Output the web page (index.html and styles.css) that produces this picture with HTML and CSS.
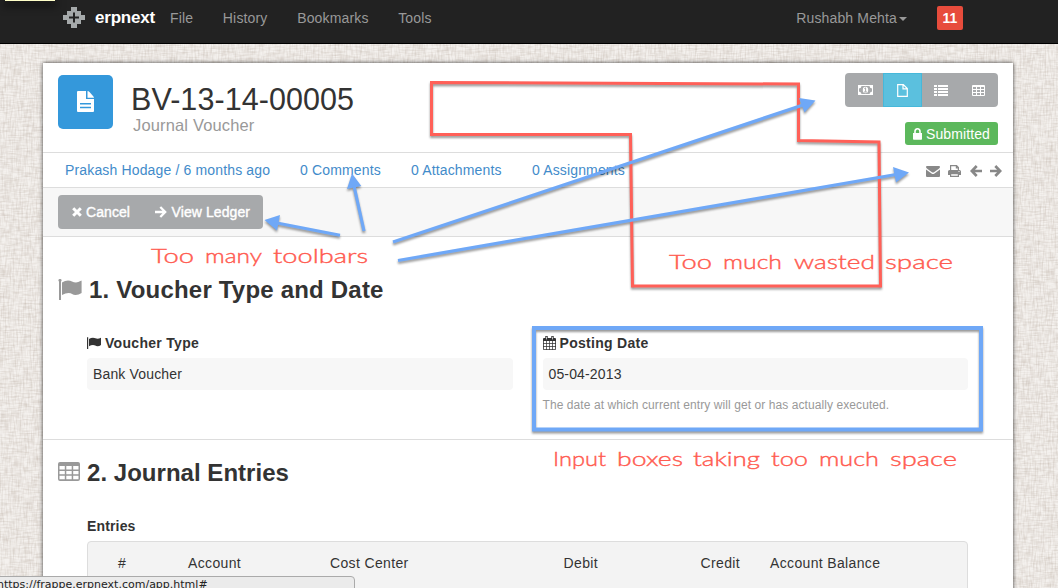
FILE: index.html
```html
<!DOCTYPE html>
<html lang="en">
<head>
<meta charset="utf-8">
<title>BV-13-14-00005</title>
<link rel="stylesheet" href="styles.css">
</head>
<body>
<svg class="linen" width="1058" height="588" aria-hidden="true">
  <filter id="weave-h" x="0" y="0" width="100%" height="100%" color-interpolation-filters="sRGB"><feTurbulence type="fractalNoise" baseFrequency="0.09 0.6" numOctaves="2" seed="4"/><feColorMatrix values="0 0 0 0 .6  0 0 0 0 .53  0 0 0 0 .47  .45 0 0 0 -.17"/></filter>
  <filter id="weave-v" x="0" y="0" width="100%" height="100%" color-interpolation-filters="sRGB"><feTurbulence type="fractalNoise" baseFrequency="0.6 0.09" numOctaves="2" seed="9"/><feColorMatrix values="0 0 0 0 .6  0 0 0 0 .53  0 0 0 0 .47  .45 0 0 0 -.17"/></filter>
  <rect width="1058" height="588" filter="url(#weave-h)"/>
  <rect width="1058" height="588" filter="url(#weave-v)"/>
</svg>

<nav class="navbar">
  <svg class="brand-mark" width="22" height="21" viewBox="0 0 22 21"><path fill="#a5a9aa" d="M8 0h6v4h4v4h4v5h-4v4h-4v4H8v-4H4v-4H0V8h4V4h4z"/><path fill="#222" d="M10 5.500h2v4h4v2h-4v4h-2v-4H6v-2h4z"/></svg>
  <span class="brand">erpnext</span>
  <a class="nav-link">File</a>
  <a class="nav-link">History</a>
  <a class="nav-link">Bookmarks</a>
  <a class="nav-link">Tools</a>
  <a class="user">Rushabh Mehta<i class="caret"></i></a>
  <span class="count">11</span>
</nav>

<main class="page">
  <header class="head">
    <div class="doc-icon"><svg width="18" height="21" viewBox="0 0 18 21"><path fill="#fff" fill-rule="evenodd" d="M1 0h8v8h8v12q0 1-1 1H1q-1 0-1-1V1q0-1 1-1zM3 12v1.500h11V12zM3 15.700v1.500h11v-1.500z"/><path fill="#fff" d="M10.500 0q1 0 2 1l3.500 4q1 1 1 1.700h-6.500z"/></svg></div>
    <div class="titles">
      <h1>BV-13-14-00005</h1>
      <div class="doctype">Journal Voucher</div>
    </div>
    <div class="head-right">
      <div class="views">
        <span class="view"><svg width="15" height="10" viewBox="0 0 15 10"><path fill="#fff" fill-rule="evenodd" d="M0 0h15v10H0zM3.500 1Q3.500 3 1 3.500v3q2.500.5 2.500 2.500h8q0-2 2.500-2.500v-3Q11.500 3 11.500 1z"/><ellipse cx="7.500" cy="5" rx="2.700" ry="3.300" fill="#fff"/><path d="M6.300 3.500l1.300-.7v4M6 7h3" stroke="#a7a9ab" fill="none"/></svg></span>
        <span class="view active"><svg width="11" height="13" viewBox="0 0 11 13"><path fill="none" stroke="#fff" stroke-width="1.200" d="M.7.6h5.600l4 4v7.700H.7zM6 .6v4.300h4.300"/></svg></span>
        <span class="view"><svg width="14" height="11" viewBox="0 0 14 11"><path fill="#fff" d="M0 0h3v2H0zM4 0h10v2H4zM0 3h3v2H0zM4 3h10v2H4zM0 6h3v2H0zM4 6h10v2H4zM0 9h3v2H0zM4 9h10v2H4z"/></svg></span>
        <span class="view"><svg width="13" height="11" viewBox="0 0 13 11"><path fill="#fff" fill-rule="evenodd" d="M1 0h11q1 0 1 1v9q0 1-1 1H1q-1 0-1-1V1q0-1 1-1zM1 2v2h3V2zM5 2v2h3V2zM9 2v2h3V2zM1 5v2h3V5zM5 5v2h3V5zM9 5v2h3V5zM1 8v2h3V8zM5 8v2h3V8zM9 8v2h3V8z"/></svg></span>
      </div>
      <span class="status"><svg width="9" height="12" viewBox="0 0 9 12"><path fill="#fff" d="M0 5h9v6q0 .8-.8.8H.8Q0 11.800 0 11z"/><path fill="none" stroke="#fff" stroke-width="1.600" d="M2 5.500V3.500a2.500 2.700 0 0 1 5 0v2"/></svg>Submitted</span>
    </div>
  </header>

  <div class="info">
    <a class="author">Prakash Hodage / 6 months ago</a>
    <a class="comments">0 Comments</a>
    <a class="attachments">0 Attachments</a>
    <a class="assignments">0 Assignments</a>
    <span class="tools">
      <svg width="14" height="11" viewBox="0 0 14 11"><path fill="#888" d="M1 0h12q1 0 1 1Q14 2 12.500 3L8 6.200q-1 .7-2 0L1.500 3Q0 2 0 1q0-1 1-1zM0 3.500l5.500 4q1.500 1 3 0l5.500-4V10q0 1-1 1H1q-1 0-1-1z"/></svg>
      <svg width="13" height="12" viewBox="0 0 13 12"><path fill="none" stroke="#888" stroke-width="1.200" d="M2.600 5.500V.6h6l1.800 1.800v3.100M8.400.8v2h2M2.600 8.600h7.800v2.800H2.600z"/><path fill="#888" fill-rule="evenodd" d="M1.500 5h10Q13 5 13 6.500V10h-2.600V8H2.600v2H0V6.500Q0 5 1.500 5zM10.500 6v1h1V6z"/></svg>
      <svg width="12" height="12" viewBox="0 0 12 12"><path fill="none" stroke="#888" stroke-width="2.700" d="M6.700 1L1.800 6l4.900 5M2 6h10"/></svg>
      <svg width="12" height="12" viewBox="0 0 12 12"><path fill="none" stroke="#888" stroke-width="2.700" d="M5.300 1l4.900 5-4.900 5M10 6H0"/></svg>
    </span>
  </div>

  <div class="actions">
    <div class="btn-group">
      <span class="btn"><svg width="10" height="10" viewBox="0 0 10 10"><path stroke="#fff" stroke-width="3" d="M1.200 1.200l7.600 7.600M8.800 1.200L1.200 8.800"/></svg>Cancel</span>
      <span class="btn"><svg width="12" height="12" viewBox="0 0 12 12"><path fill="none" stroke="#fff" stroke-width="2.300" d="M5.300 1l4.900 5-4.900 5M10 6H0"/></svg>View Ledger</span>
    </div>
  </div>

  <section class="section voucher">
    <h2><svg class="flag-lg" width="24" height="21" viewBox="0 0 24 21"><path fill="#999" d="M1 2.500a1.500 1.500 0 1 1 2 0V21H1zM4 3.500Q7 1.500 10 1.500c3 0 5 2 8 2q2 0 5-1.800.6-.3.600.5V14q-3 2-6 2c-3 0-4-2-7-2q-3 0-6.600 2z"/></svg>1. Voucher Type and Date</h2>
    <div class="fields">
      <div class="field">
        <div class="label"><svg width="14" height="12" viewBox="0 0 14 12"><path fill="#333" d="M0 .3h1.200V12H0zM2 2Q4 .8 6 .8c2 0 3 1 4.500 1Q12 1.800 14 .8V8q-1.600 1.200-3.500 1.200C8.500 9.200 8 8 6 8Q4 8 2 9.200z"/></svg>Voucher Type</div>
        <div class="value">Bank Voucher</div>
      </div>
      <div class="field">
        <div class="label"><svg width="13" height="14" viewBox="0 0 13 14"><path fill="#333" fill-rule="evenodd" d="M1 2h11q1 0 1 1v10q0 1-1 1H1q-1 0-1-1V3q0-1 1-1zM.8 5v2.200H3.200V5zM3.900 5v2.200h2.300V5zM6.900 5v2.200h2.300V5zM9.900 5v2.200h2.300V5zM.8 7.900v2.300h2.400V7.900zM3.900 7.900v2.300h2.300V7.900zM6.900 7.900v2.300h2.300V7.900zM9.900 7.900v2.300h2.300V7.900zM.8 10.900v2.300h2.400v-2.300zM3.900 10.900v2.300h2.300v-2.300zM6.900 10.900v2.300h2.300v-2.300zM9.900 10.900v2.300h2.300v-2.300z"/><path stroke="#333" stroke-width="2.400" d="M3.500 0v4M9.500 0v4"/><path stroke="#fff" stroke-width=".7" d="M3.500.8v2.600M9.500.8v2.600"/></svg>Posting Date</div>
        <div class="value">05-04-2013</div>
        <div class="help">The date at which current entry will get or has actually executed.</div>
      </div>
    </div>
  </section>

  <section class="section entries">
    <h2><svg class="table-lg" width="22" height="19" viewBox="0 0 22 19"><path fill="#999" fill-rule="evenodd" d="M2 0h18q2 0 2 2v15q0 2-2 2H2q-2 0-2-2V2q0-2 2-2zM1.500 4v3.400h5.300V4zM8.300 4v3.400h5.400V4zM15.200 4v3.400h5.300V4zM1.500 8.900v3.400h5.300V8.900zM8.300 8.900v3.400h5.400V8.900zM15.200 8.900v3.400h5.300V8.900zM1.500 13.800v3.400h5.300v-3.400zM8.300 13.800v3.400h5.400v-3.400zM15.200 13.800v3.400h5.300v-3.400z"/></svg>2. Journal Entries</h2>
    <div class="grid-label">Entries</div>
    <div class="grid-head">
      <span>#</span><span>Account</span><span>Cost Center</span><span class="num">Debit</span><span class="num">Credit</span><span class="balance">Account Balance</span>
    </div>
  </section>
</main>

<svg class="notes" width="1058" height="588" viewBox="0 0 1058 588">
  <g class="shade">
    <path class="red-line" d="M431.500 82.500L798.500 84V140.500L879 142L880.500 286H632.500L630.500 134.500H431.500z"/>
    <path class="blue-line" d="M393 242L803 105M398 260.500L896 174.500M364 231L354 186M340 235.300L277 223"/>
    <path class="blue-head" d="M815.500 100.500L799 98l5.500 14.500zM909 172.500L893 167l3 15.500zM352 173.500L347 189l14.300-3zM264.500 220l15.500-5-3 15.500z"/>
    <rect class="blue-box" x="534" y="328" width="447" height="101.500"/>
  </g>
  <text x="151" y="263" textLength="43" lengthAdjust="spacingAndGlyphs">Too</text>
  <text x="205" y="263" textLength="57" lengthAdjust="spacingAndGlyphs">many</text>
  <text x="273" y="263" textLength="95" lengthAdjust="spacingAndGlyphs">toolbars</text>
  <text x="669" y="269" textLength="43" lengthAdjust="spacingAndGlyphs">Too</text>
  <text x="723" y="269" textLength="59" lengthAdjust="spacingAndGlyphs">much</text>
  <text x="794" y="269" textLength="81" lengthAdjust="spacingAndGlyphs">wasted</text>
  <text x="885" y="269" textLength="68" lengthAdjust="spacingAndGlyphs">space</text>
  <text x="553" y="466" textLength="53" lengthAdjust="spacingAndGlyphs">Input</text>
  <text x="617" y="466" textLength="66" lengthAdjust="spacingAndGlyphs">boxes</text>
  <text x="693" y="466" textLength="67" lengthAdjust="spacingAndGlyphs">taking</text>
  <text x="771" y="466" textLength="37" lengthAdjust="spacingAndGlyphs">too</text>
  <text x="819" y="466" textLength="60" lengthAdjust="spacingAndGlyphs">much</text>
  <text x="890" y="466" textLength="67" lengthAdjust="spacingAndGlyphs">space</text>
</svg>

<div class="tip-edge"></div>
<div class="link-status">https://frappe.erpnext.com/app.html#</div>
</body>
</html>
```
FILE: styles.css
```css
* { box-sizing: border-box; }

body {
  margin: 0;
  width: 1058px;
  height: 588px;
  overflow: hidden;
  position: relative;
  background: #f4f1ee;
  font: 14px/20px "Liberation Sans", Arial, sans-serif;
  letter-spacing: .15px;
  color: #333;
}

svg { display: block; flex: none; }

.linen { position: absolute; left: 0; top: 0; z-index: -1; }

.navbar {
  display: flex;
  align-items: flex-start;
  height: 44px;
  padding-left: 63px;
  background: #222;
  border-bottom: 1px solid #000;
  color: #999;
}

.brand-mark { margin-top: 7px; }

.brand {
  width: 75px;
  margin: 8px 0 0 10px;
  font-size: 17px;
  font-weight: bold;
  letter-spacing: -.2px;
  color: #fff;
}

.nav-link { margin: 8px 29.700px 0 0; }

.user {
  display: flex;
  align-items: center;
  margin: 8px 30px 0 auto;
}

.caret {
  margin: 1px 0 0 2px;
  border: 4px solid transparent;
  border-top-color: #999;
  border-bottom: 0;
}

.count {
  width: 26px;
  height: 24px;
  margin: 6px 95px 0 0;
  border-radius: 2px;
  background: #e74c3c;
  color: #fff;
  font-weight: bold;
  line-height: 24px;
  text-align: center;
}

.page {
  width: 970px;
  height: 540px;
  margin: 19px 0 0 43px;
  background: #fff;
  box-shadow: 0 0 4px rgba(0, 0, 0, .75);
}

.head {
  display: flex;
  height: 90px;
  padding: 12px 15px 0;
  border-bottom: 1px solid #ddd;
}

.doc-icon {
  display: flex;
  align-items: center;
  justify-content: center;
  width: 55px;
  height: 54px;
  padding-bottom: 2px;
  border-radius: 5px;
  background: #3498db;
}

.titles { padding: 6px 0 0 18px; }

h1 {
  margin: 0;
  font-size: 30.500px;
  font-weight: normal;
  line-height: 36px;
  letter-spacing: .07px;
}

.doctype {
  padding-left: 2px;
  color: #999;
  font-size: 16.500px;
  line-height: 17px;
}

.head-right {
  display: flex;
  flex-direction: column;
  align-items: flex-end;
  margin-left: auto;
}

.views {
  display: flex;
  width: 153px;
  height: 34px;
  margin-top: -2px;
  overflow: hidden;
  border-radius: 4px;
  background: #a7a9ab;
}

.view {
  display: flex;
  width: 38.300px;
  align-items: center;
  justify-content: center;
}

.view:first-child { padding-left: 3px; }

.view.active {
  background: #5bc0de;
  border: 1px solid #46b8da;
}

.status {
  display: flex;
  align-items: center;
  gap: 4px;
  width: 93px;
  height: 23px;
  margin-top: 15px;
  padding-left: 8px;
  border-radius: 3px;
  background: #5cb85c;
  color: #fff;
  letter-spacing: .1px;
}

.info {
  display: flex;
  align-items: center;
  height: 35px;
  padding: 0 11px 1px 22px;
  border-bottom: 1px solid #ddd;
  color: #428bca;
}

.author { width: 235px; }
.comments { width: 111px; }
.attachments { width: 121px; }

.tools {
  display: flex;
  align-items: center;
  gap: 8.500px;
  margin: 3px 0 0 auto;
}

.actions {
  height: 49px;
  padding: 7px 15px;
  background: #f7f7f7;
  border-bottom: 1px solid #ddd;
}

.btn-group {
  display: flex;
  width: 205px;
  height: 34px;
  border-radius: 4px;
  background: #a7a9ab;
  color: #fff;
  letter-spacing: .08px;
  -webkit-text-stroke: .4px #fff;
}

.btn {
  display: flex;
  align-items: center;
  gap: 4.500px;
  padding-left: 13.500px;
}

.btn + .btn { padding-left: 25px; }

.section { padding: 0 15px; }

.voucher {
  height: 203px;
  padding-top: 38px;
  border-bottom: 1px solid #ddd;
}

h2 {
  display: flex;
  align-items: center;
  margin: 0;
  font-size: 24px;
  line-height: 30px;
  letter-spacing: .03px;
}

.voucher h2 { letter-spacing: .2px; }

.flag-lg { margin-right: 7px; margin-top: -2px; }
.table-lg { margin-right: 7px; margin-top: -3px; }

.fields {
  display: flex;
  gap: 30px;
  padding: 28px 30px 0 29px;
}

.field { flex: 1; }

.label {
  display: flex;
  align-items: center;
  gap: 4px;
  font-weight: bold;
  letter-spacing: .3px;
}

.value {
  height: 32px;
  margin-top: 5px;
  padding: 6px;
  border-radius: 4px;
  background: #f7f7f7;
}

.help {
  margin-top: 5px;
  color: #999;
  font-size: 12px;
  letter-spacing: .08px;
}

.entries { padding-top: 18px; }

.grid-label {
  margin: 28px 0 0 29px;
  font-weight: bold;
}

.grid-head {
  display: grid;
  grid-template-columns: 70px 142px 144px 124px 142px 1fr;
  height: 60px;
  margin: 5px 30px 0 29px;
  padding: 11px 0 0 30px;
  border: 1px solid #ddd;
  border-radius: 4px;
  background: #f3f3f3;
  letter-spacing: .35px;
}

.num { text-align: right; }
.balance { padding-left: 30px; }

.notes {
  position: absolute;
  left: 0;
  top: 0;
  fill: #ff5b50;
  font: 300 20px Lato, sans-serif;
  letter-spacing: 0;
}

.notes text { stroke: #ff5b50; stroke-width: .4px; }

.shade { filter: drop-shadow(0 2px 1px rgba(0, 0, 0, .4)); }
.red-line { fill: none; stroke: #ff6058; stroke-width: 3; }
.blue-line { fill: none; stroke: #6fa8f7; stroke-width: 3.200; }
.blue-head { fill: #6fa8f7; }
.blue-box { fill: none; stroke: #6fa8f7; stroke-width: 4; }

.tip-edge {
  position: absolute;
  left: 5px;
  top: 0;
  width: 50px;
  height: 1px;
  background: #ffffc8;
  box-shadow: 0 3px 8px 2px rgba(0, 0, 0, .6);
}

.link-status {
  position: absolute;
  left: -1px;
  top: 576px;
  width: 356px;
  height: 20px;
  border: 1px solid #aaa;
  border-radius: 0 4px 0 0;
  background: #ebebeb;
  color: #222;
  font: 11px/16px "DejaVu Sans", sans-serif;
  letter-spacing: 0;
  text-indent: -3px;
}
```
